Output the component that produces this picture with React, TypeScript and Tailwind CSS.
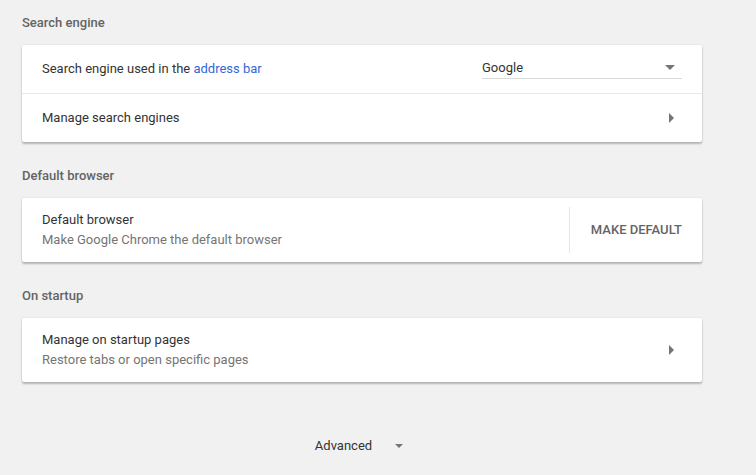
import React from "react";

function DropArrow({ className }: { className?: string }) {
  return (
    <svg viewBox="0 0 10 5" className={className} fill="currentColor">
      <path d="M0 0l5 5 5-5z" />
    </svg>
  );
}

function RightArrow() {
  return (
    <svg viewBox="0 0 5 10" className="w-[5px] h-[10px] text-[#757575]" fill="currentColor">
      <path d="M0 0l5 5-5 5z" />
    </svg>
  );
}

function SectionTitle({ children, first }: { children: React.ReactNode; first?: boolean }) {
  return (
    <h2
      className={`${first ? "" : "mt-[11px]"} pt-[13px] pb-[12px] text-[13px] leading-[20px] font-medium text-[#646464]`}
    >
      {children}
    </h2>
  );
}

function Card({ children }: { children: React.ReactNode }) {
  return (
    <div className="bg-white rounded-[2px] shadow-[0_2px_2px_rgba(0,0,0,0.24),0_0_2px_rgba(0,0,0,0.12)]">
      {children}
    </div>
  );
}

export default function App() {
  return (
    <main
      className="min-h-screen bg-[#f1f1f1] text-[#333333]"
      style={{ fontFamily: "Roboto, 'Liberation Sans', sans-serif" }}
    >
      <div className="w-[680px] ml-[22px] text-[13px]">
        <SectionTitle first>Search engine</SectionTitle>
        <Card>
          <div className="h-[48px] flex items-center justify-between px-[20px]">
            <span>
              Search engine used in the{" "}
              <a className="text-[#3367d6]">address bar</a>
            </span>
            <div className="w-[200px] h-[22px] mb-[2px] flex items-center justify-between border-b border-[#dadada]">
              <span className="text-[13px]">Google</span>
              <DropArrow className="w-[10px] h-[5px] text-[#757575] mr-[7px]" />
            </div>
          </div>
          <div className="h-px bg-[#e9e9e9]" />
          <div className="h-[48px] flex items-center justify-between pl-[20px] pr-[28px]">
            <span>Manage search engines</span>
            <RightArrow />
          </div>
        </Card>

        <SectionTitle>Default browser</SectionTitle>
        <Card>
          <div className="h-[64px] flex items-center pl-[20px] pr-[20px]">
            <div className="flex-1 leading-[20px]">
              <div>Default browser</div>
              <div className="text-[#757575]">Make Google Chrome the default browser</div>
            </div>
            <div className="w-px h-[46px] bg-[#e5e5e5] mr-[21px]" />
            <button className="font-medium text-[#646464] uppercase">Make default</button>
          </div>
        </Card>

        <SectionTitle>On startup</SectionTitle>
        <Card>
          <div className="h-[64px] flex items-center justify-between pl-[20px] pr-[28px]">
            <div className="leading-[20px]">
              <div>Manage on startup pages</div>
              <div className="text-[#757575]">Restore tabs or open specific pages</div>
            </div>
            <RightArrow />
          </div>
        </Card>

        <div className="mt-[54px] flex justify-center pr-[6px]">
          <button className="flex items-center leading-[20px]">
            <span>Advanced</span>
            <DropArrow className="w-[8px] h-[4px] text-[#757575] ml-[23px]" />
          </button>
        </div>
      </div>
    </main>
  );
}
